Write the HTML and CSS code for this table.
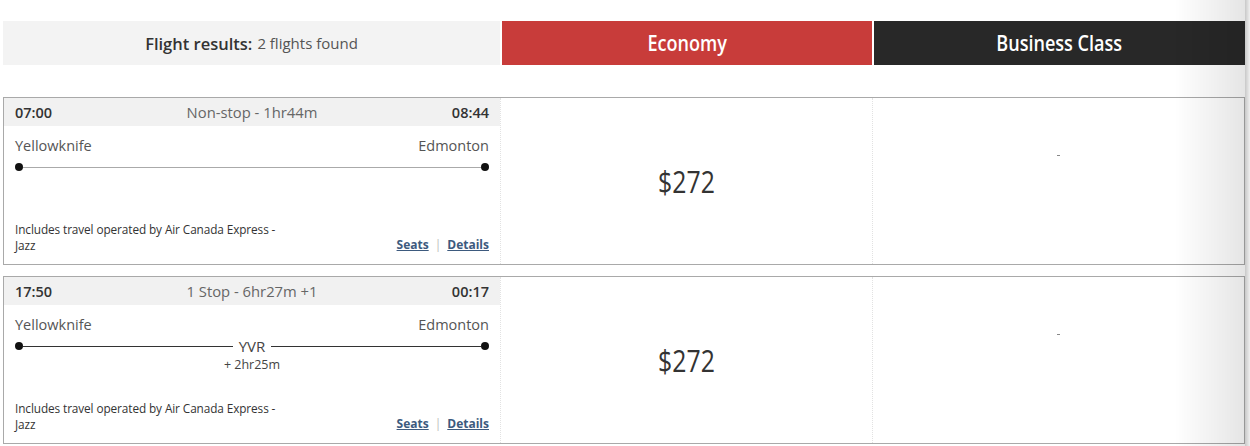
FILE: index.html
```html
<!DOCTYPE html>
<html lang="en">
<head>
    <meta charset="UTF-8">
    <meta name="viewport" content="width=device-width, initial-scale=1.0">
    <title>Flight results</title>
    <link rel="stylesheet" href="styles.css">
</head>
<body>

    <div class="results">

        <div class="cabins">
            <div class="cabin-title"><strong>Flight results:</strong> 2 flights found</div>
            <div class="cabin economy"><span>Economy</span></div>
            <div class="cabin business"><span>Business Class</span></div>
        </div>

        <div class="flight">
            <div class="itinerary">
                <div class="times">
                    <span class="time">07:00</span>
                    <span class="duration">Non-stop - 1hr44m</span>
                    <span class="time">08:44</span>
                </div>
                <div class="route">
                    <div class="cities">
                        <span>Yellowknife</span>
                        <span>Edmonton</span>
                    </div>
                    <div class="track light">
                        <span class="dot"></span>
                        <span class="segment"></span>
                        <span class="dot"></span>
                    </div>
                </div>
                <div class="foot">
                    <p class="operator">Includes travel operated by Air Canada Express - Jazz</p>
                    <div class="links"><a href="#">Seats</a><span class="sep">|</span><a href="#">Details</a></div>
                </div>
            </div>
            <div class="fare"><span>$272</span></div>
            <div class="fare-empty"><span class="dash"></span></div>
        </div>

        <div class="flight">
            <div class="itinerary">
                <div class="times">
                    <span class="time">17:50</span>
                    <span class="duration">1 Stop - 6hr27m +1</span>
                    <span class="time">00:17</span>
                </div>
                <div class="route">
                    <div class="cities">
                        <span>Yellowknife</span>
                        <span>Edmonton</span>
                    </div>
                    <div class="track">
                        <span class="dot"></span>
                        <span class="segment"></span>
                        <span class="stop">YVR</span>
                        <span class="segment"></span>
                        <span class="dot"></span>
                    </div>
                    <div class="layover">+ 2hr25m</div>
                </div>
                <div class="foot">
                    <p class="operator">Includes travel operated by Air Canada Express - Jazz</p>
                    <div class="links"><a href="#">Seats</a><span class="sep">|</span><a href="#">Details</a></div>
                </div>
            </div>
            <div class="fare"><span>$272</span></div>
            <div class="fare-empty"><span class="dash"></span></div>
        </div>

    </div>

    <div class="edge"></div>

</body>
</html>
```
FILE: styles.css
```css
* {
    margin: 0;
    padding: 0;
    box-sizing: border-box;
}

body {
    font-family: "Open Sans", "Liberation Sans", sans-serif;
    color: #333;
    background-color: #fff;
}

.results {
    width: 1242px;
    margin-left: 3px;
    padding-top: 21px;
}

.cabins {
    display: grid;
    grid-template-columns: 497px 370px 1fr;
    gap: 2px;
    height: 44px;
}

.cabin-title {
    display: flex;
    align-items: center;
    justify-content: center;
    gap: 5px;
    background-color: #f3f3f3;
    font-size: 15px;
    color: #555;
}

.cabin-title strong {
    font-size: 16.5px;
    font-weight: 600;
    color: #333;
}

.cabin {
    display: flex;
    align-items: center;
    justify-content: center;
    font-size: 21px;
    font-weight: 600;
    color: #fff;
}

.cabin span {
    display: inline-block;
    transform: scaleX(0.86);
}

.economy {
    background-color: #c83c3a;
}

.business {
    background-color: #282828;
}

.flight {
    display: grid;
    grid-template-columns: 497px 372px 1fr;
    height: 168px;
    margin-top: 32px;
    border: 1px solid #a9a9a9;
}

.flight + .flight {
    margin-top: 11px;
}

.itinerary {
    display: flex;
    flex-direction: column;
    border-right: 1px dotted #e2e2e2;
}

.times {
    display: flex;
    justify-content: space-between;
    align-items: center;
    height: 28px;
    padding: 0 11px;
    background-color: #f1f1f1;
    font-size: 14.8px;
    color: #666;
}

.time {
    font-size: 14.5px;
    font-weight: 600;
    color: #333;
    width: 70px;
}

.time:last-child {
    text-align: right;
}

.route {
    padding: 11px 11px 0;
}

.cities {
    display: flex;
    justify-content: space-between;
    font-size: 14.5px;
    line-height: 18px;
    color: #555;
}

.track {
    display: flex;
    align-items: center;
    height: 14px;
    margin-top: 5px;
}

.dot {
    width: 8px;
    height: 8px;
    border-radius: 50%;
    background-color: #111;
}

.segment {
    flex: 1;
    height: 1px;
    background-color: #333;
}

.track.light .segment {
    background-color: #aaa;
}

.stop {
    padding: 0 6px;
    font-size: 15px;
    line-height: 14px;
    color: #444;
}

.layover {
    margin-top: 3px;
    text-align: center;
    font-size: 12.5px;
    color: #444;
}

.foot {
    display: flex;
    justify-content: space-between;
    align-items: flex-end;
    margin-top: auto;
    padding: 0 11px 11px;
}

.operator {
    width: 280px;
    font-size: 11.8px;
    line-height: 16px;
    color: #333;
    letter-spacing: -0.1px;
}

.links {
    font-size: 12px;
    font-weight: 700;
    line-height: 16px;
}

.links a {
    color: #3d5a7e;
}

.sep {
    margin: 0 6px;
    font-weight: 400;
    color: #bbb;
}

.fare {
    display: flex;
    align-items: center;
    justify-content: center;
    border-right: 1px dotted #e2e2e2;
    font-size: 31px;
    color: #333;
}

.fare span {
    display: inline-block;
    transform: scaleX(0.8);
}

.fare-empty {
    display: flex;
    justify-content: center;
    padding-top: 57px;
}

.dash {
    width: 3px;
    height: 1px;
    background-color: #888;
}

.edge {
    position: fixed;
    top: 0;
    right: 0;
    width: 75px;
    height: 100%;
    background: linear-gradient(to right, rgba(0, 0, 0, 0), rgba(0, 0, 0, 0.1) 93%, rgba(0, 0, 0, 0.2) 94%, rgba(0, 0, 0, 0.06));
    pointer-events: none;
}
```
